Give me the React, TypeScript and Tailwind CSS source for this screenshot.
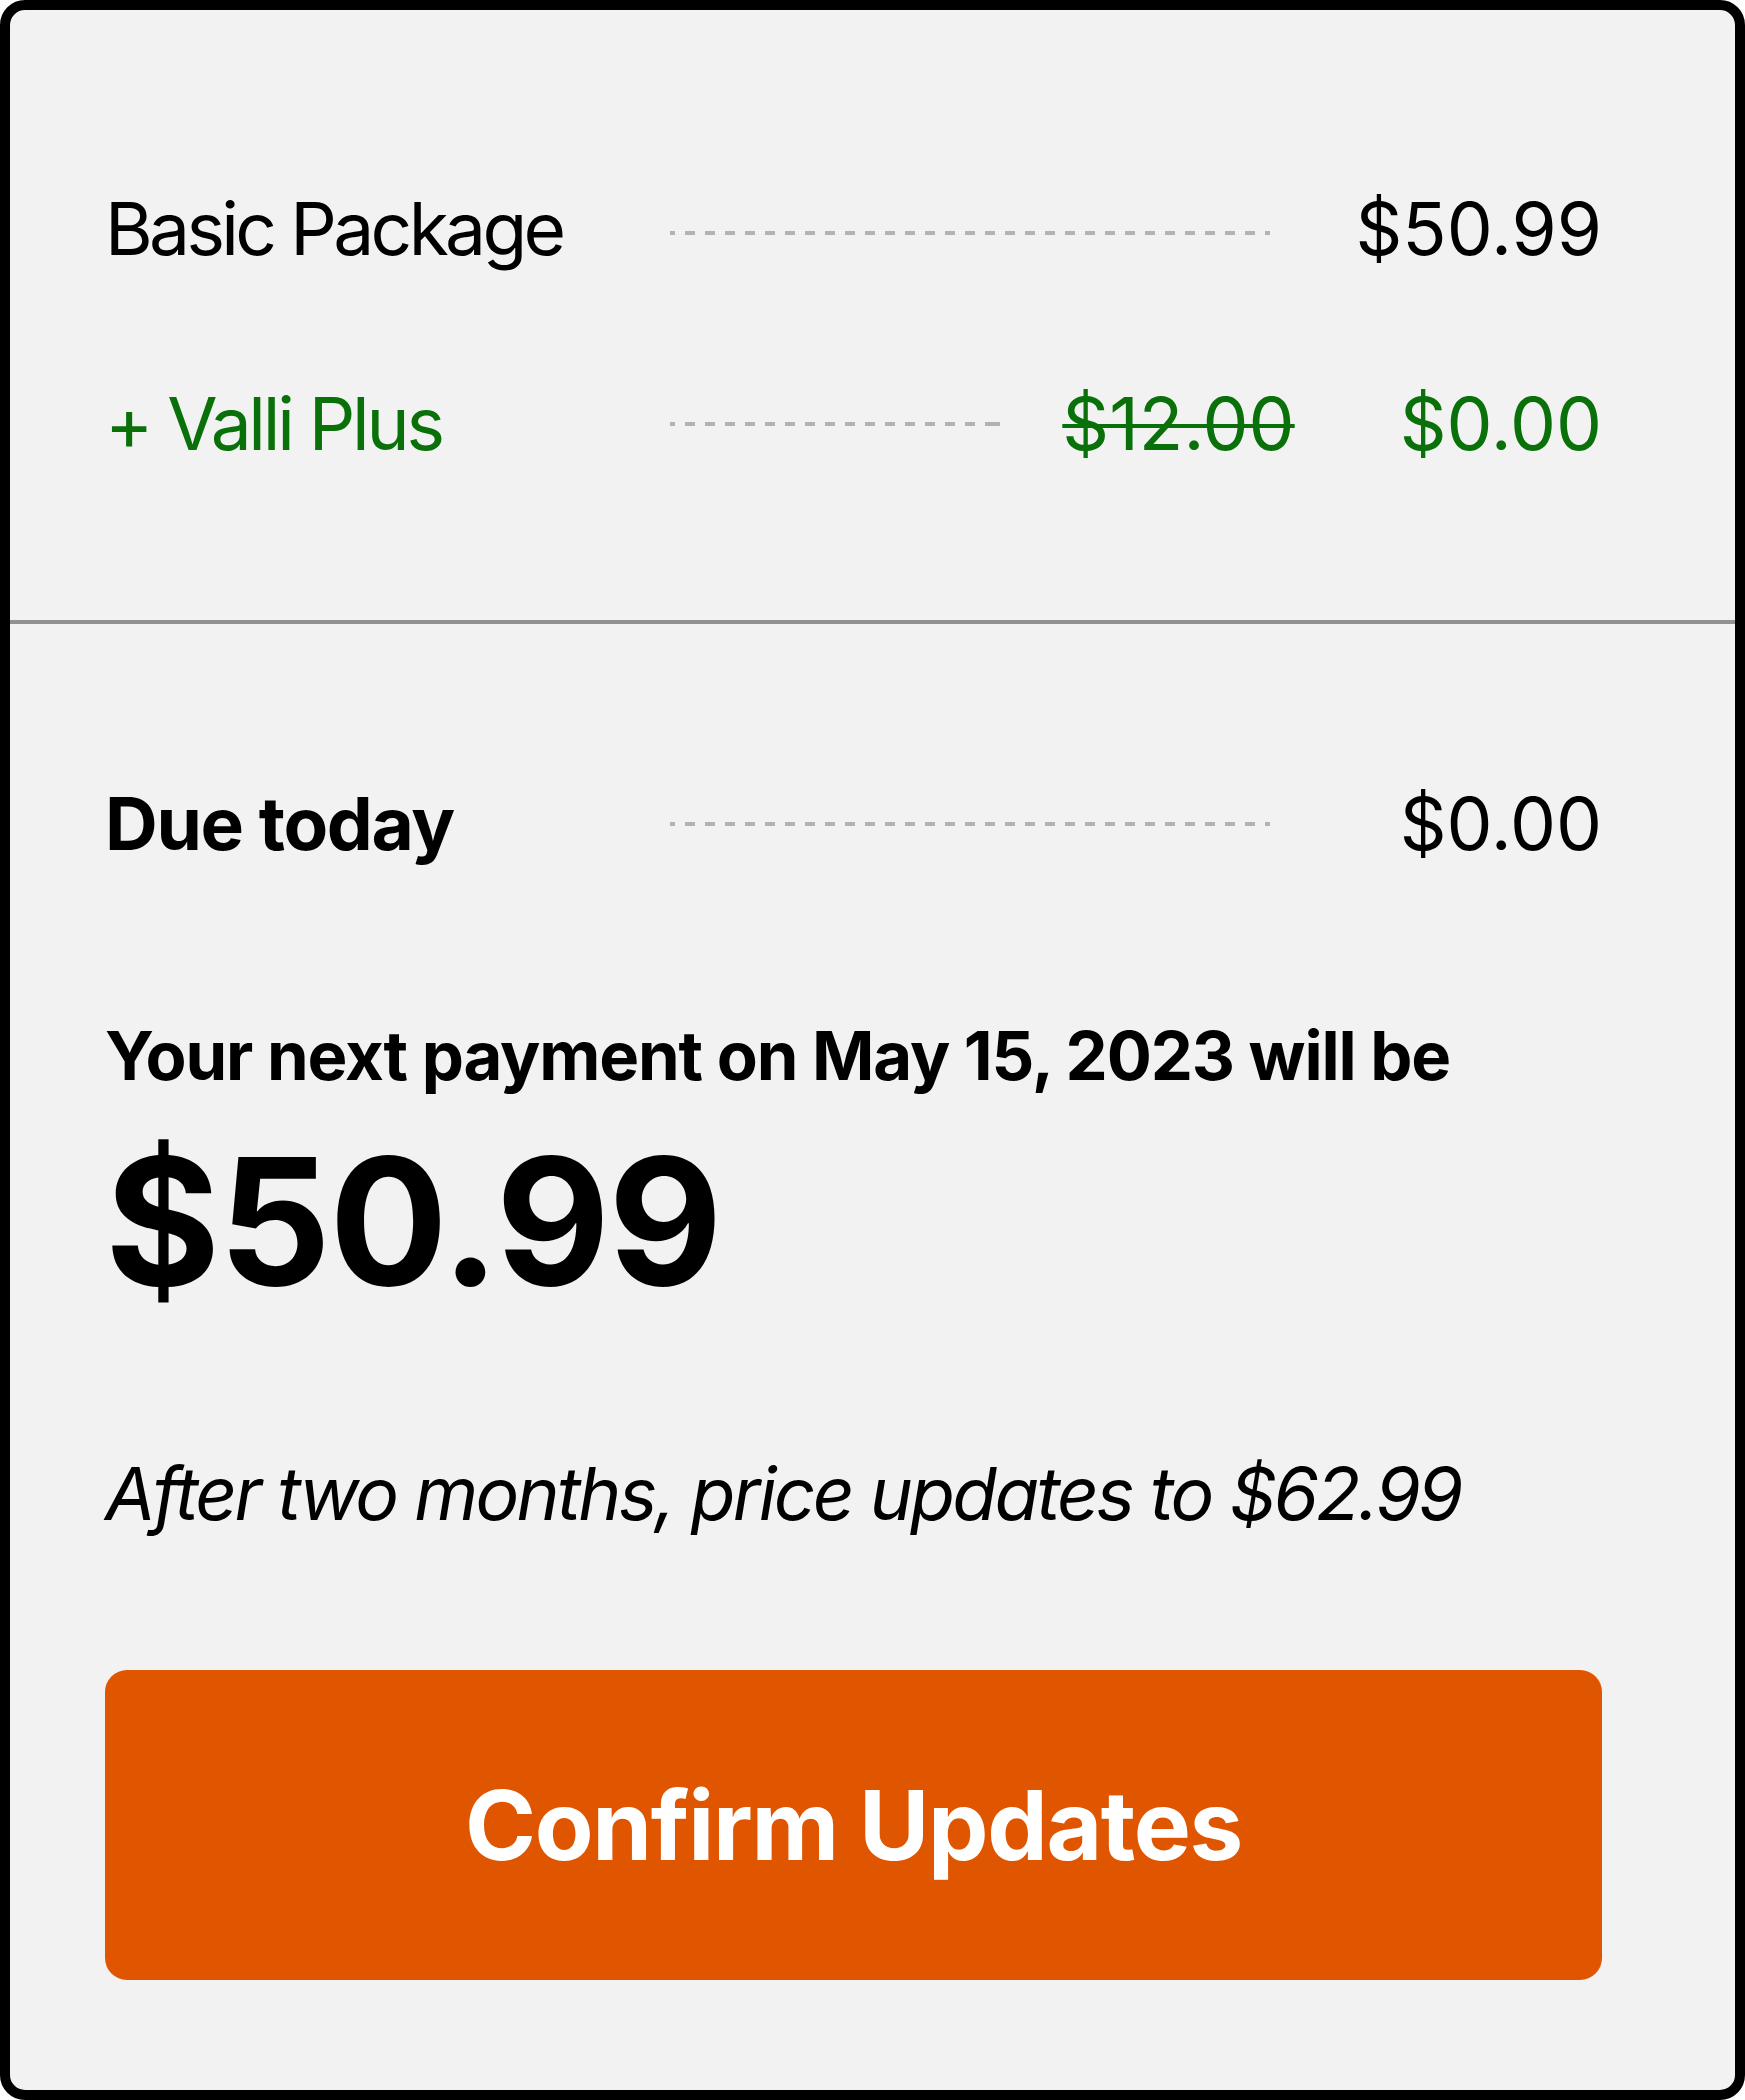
// Plan change summary card: line items, due today, next payment and confirm button
const dots = 'h-[4px] bg-[position:-5px_0] bg-[repeating-linear-gradient(to_right,#b3b3b3_0px,#b3b3b3_10px,transparent_10px,transparent_20px)]';

export default function App() {
  return (
    <div className="w-[1745px] h-[2100px] font-[Inter,sans-serif] text-black">
      <div className="h-full border-[10px] border-black rounded-[25px] bg-[#f2f2f2] flex flex-col">
        {/* line items */}
        <div className="pt-[182px] pb-[160px] pl-[95px] pr-[133px] flex flex-col gap-[122px]">
          <div className="flex items-center text-[73px] leading-none">
            <div className="w-[565px] tracking-[-0.05em]">Basic Package</div>
            <div className={`w-[600px] translate-y-[4px] ${dots}`} />
            <div className="flex-1 text-right">$50.99</div>
          </div>
          <div className="flex items-center text-[73px] leading-none text-[#0a700a]">
            <div className="w-[565px] tracking-[-0.045em]">+ Valli Plus</div>
            <div className={`w-[330px] ${dots}`} />
            <div className="flex-1 flex justify-end gap-[105px]">
              <span className="line-through decoration-[4px]">$12.00</span>
              <span>$0.00</span>
            </div>
          </div>
        </div>

        <div className="h-[4px] bg-[#919191]" />

        <div className="pt-[163px] pl-[95px] pr-[133px] flex flex-col">
          <div className="flex items-center text-[73px] leading-none">
            <div className="w-[565px] font-bold tracking-[-0.018em]">Due today</div>
            <div className={`w-[600px] ${dots}`} />
            <div className="flex-1 text-right">$0.00</div>
          </div>

          <p className="mt-[162px] text-[67px] leading-none font-bold tracking-[-0.017em]">Your next payment on May 15, 2023 will be</p>
          <p className="mt-[44px] text-[176px] leading-none font-bold tracking-[-0.01em]">$50.99</p>
          <p className="mt-[148px] text-[73px] leading-none italic tracking-[-0.037em]">After two months, price updates to $62.99</p>

          <button className="mt-[140px] h-[310px] w-full rounded-[22px] bg-[#e05500] text-white text-[96px] leading-none font-bold tracking-[-0.014em]">
            Confirm Updates
          </button>
        </div>
      </div>
    </div>
  );
}
